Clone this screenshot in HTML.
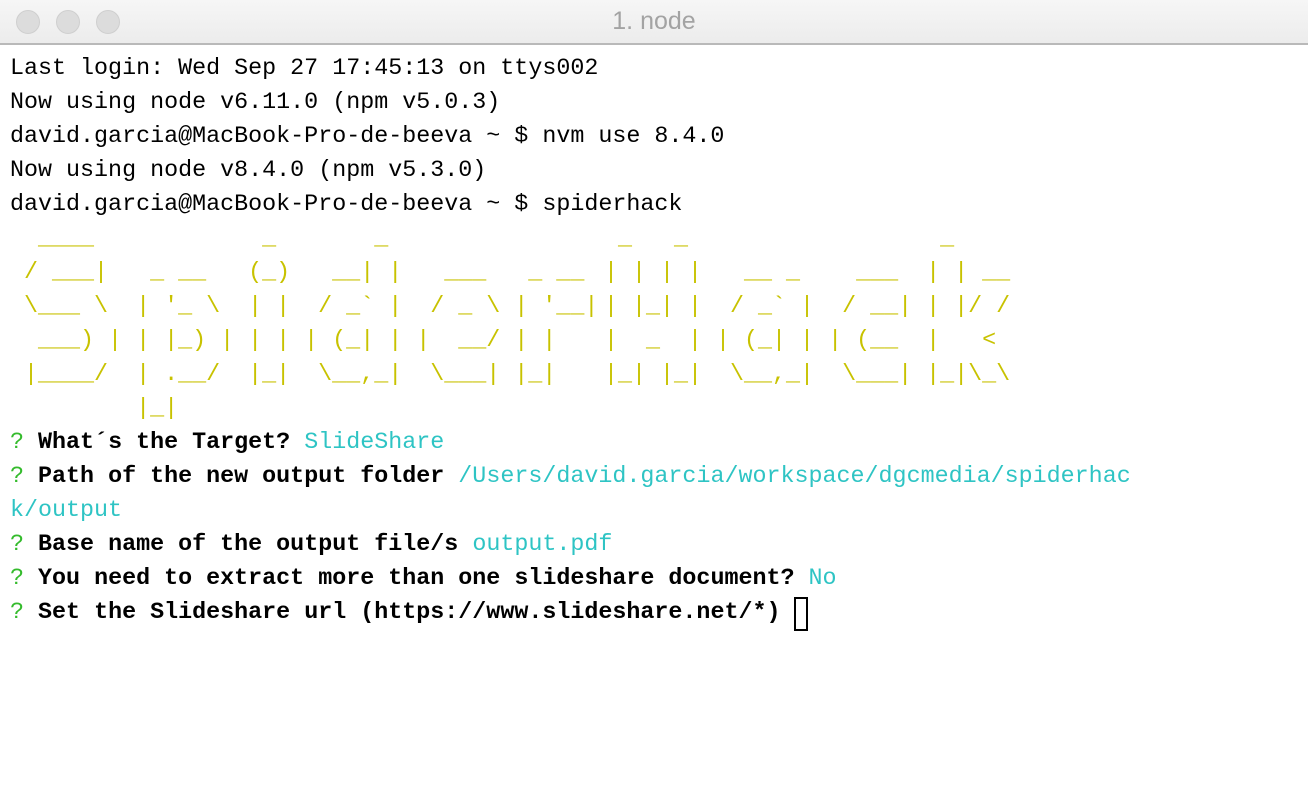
<!DOCTYPE html>
<html><head><meta charset="utf-8"><style>
*{margin:0;padding:0;box-sizing:border-box}
body{width:1308px;height:802px;background:#fff;overflow:hidden;position:relative}
.bar{position:absolute;left:0;top:0;width:1308px;height:45px;background:linear-gradient(#f6f6f6,#ececec);border-bottom:2px solid #b9b9b9}
.dot{position:absolute;top:10px;width:24px;height:24px;border-radius:50%;background:#dcdcdc;border:1px solid #cfcfcf}
.title{position:absolute;top:7px;left:0;width:1308px;text-align:center;font:25px "Liberation Sans",sans-serif;color:#a3a3a3}
.term{position:absolute;left:10px;top:52px;font:23.35px/34px "Liberation Mono",monospace;color:#000;white-space:pre}
.b{font-weight:bold}
.g{color:#34bb2c}.c{color:#2ec4c4}
.art{display:flex;color:#c8c200;margin-left:1ch}
.art pre{font:23.35px/34px "Liberation Mono",monospace;margin-right:1ch}
.art pre.n{margin-right:0.4ch}
.cur{position:absolute;left:794px;top:597px;width:14px;height:34px;border:2px solid #000}
</style></head><body>
<div class="bar"><div class="dot" style="left:16px"></div><div class="dot" style="left:56px"></div><div class="dot" style="left:96px"></div><div class="title">1. node</div></div>
<div class="term"><div>Last login: Wed Sep 27 17:45:13 on ttys002</div><div>Now using node v6.11.0 (npm v5.0.3)</div><div>david.garcia@MacBook-Pro-de-beeva ~ $ nvm use 8.4.0</div><div>Now using node v8.4.0 (npm v5.3.0)</div><div>david.garcia@MacBook-Pro-de-beeva ~ $ spiderhack</div><div class="art"><pre> ____  
/ ___| 
\___ \ 
 ___) |
|____/ 
       </pre><pre>       
 _ __  
| '_ \ 
| |_) |
| .__/ 
|_|    </pre><pre> _ 
(_)
| |
| |
|_|
   </pre><pre>     _ 
  __| |
 / _` |
| (_| |
 \__,_|
       </pre><pre>      
  ___ 
 / _ \
|  __/
 \___|
      </pre><pre class="n">      
 _ __ 
| '__|
| |   
|_|   
      </pre><pre> _   _ 
| | | |
| |_| |
|  _  |
|_| |_|
       </pre><pre>       
  __ _ 
 / _` |
| (_| |
 \__,_|
       </pre><pre>      
  ___ 
 / __|
| (__ 
 \___|
      </pre><pre> _    
| | __
| |/ /
|   &lt; 
|_|\_\
      </pre></div><div><span class="g">?</span> <span class="b">What´s the Target?</span> <span class="c">SlideShare</span></div><div><span class="g">?</span> <span class="b">Path of the new output folder</span> <span class="c">/Users/david.garcia/workspace/dgcmedia/spiderhac</span></div><div class="c">k/output</div><div><span class="g">?</span> <span class="b">Base name of the output file/s</span> <span class="c">output.pdf</span></div><div><span class="g">?</span> <span class="b">You need to extract more than one slideshare document?</span> <span class="c">No</span></div><div><span class="g">?</span> <span class="b">Set the Slideshare url (https://www.slideshare.net/*)</span></div></div>
<div class="cur"></div>
</body></html>
